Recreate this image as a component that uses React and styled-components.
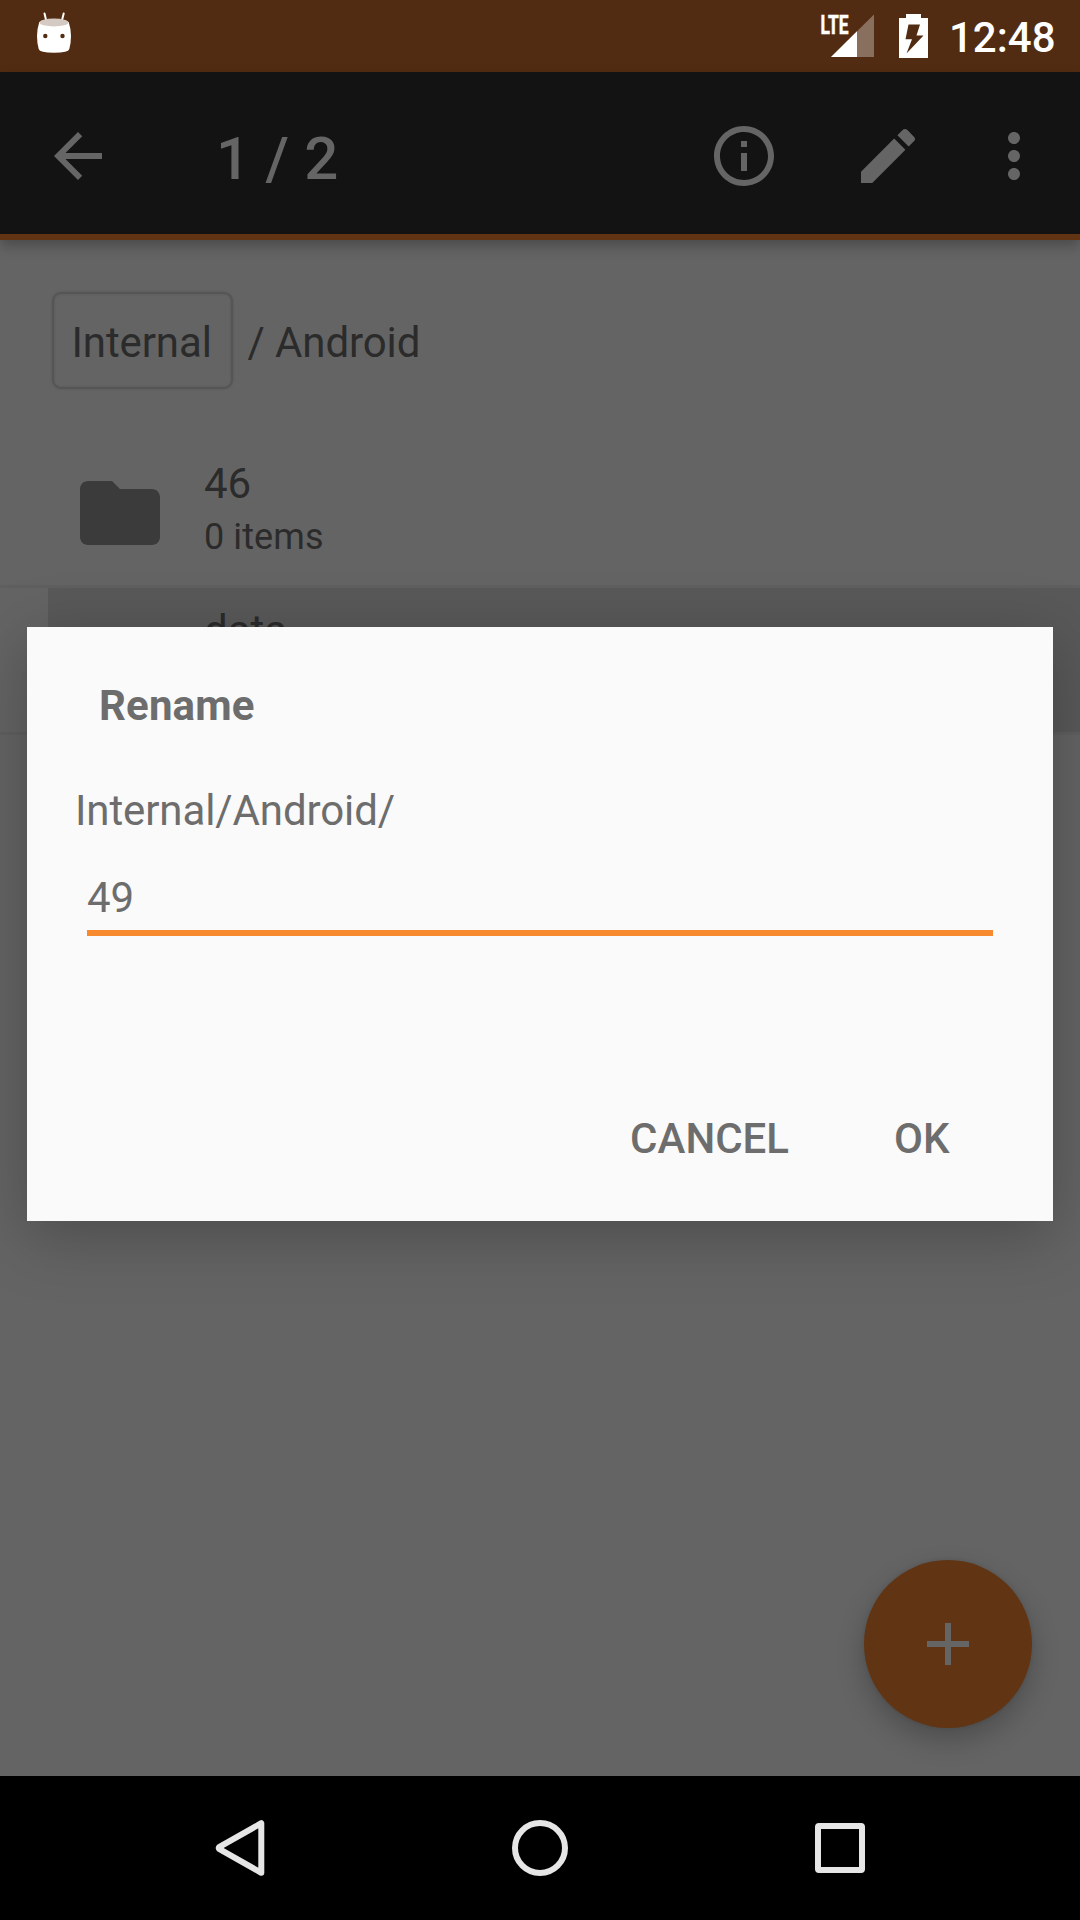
import React from "react";
import styled, { createGlobalStyle } from "styled-components";

const GlobalStyle = createGlobalStyle`
  *, *::before, *::after { box-sizing: border-box; }
  body { margin: 0; background: #000; font-family: Roboto, "Liberation Sans", sans-serif; }
`;

const Screen = styled.div`
  position: relative;
  display: flex;
  flex-direction: column;
  width: 1080px;
  height: 1920px;
  overflow: hidden;
  background: #646464;
  color: #2b2b2b;
`;

const StatusBar = styled.header`
  flex: none;
  display: flex;
  align-items: flex-start;
  height: 72px;
  padding: 0 25px 0 36px;
  background: #522c12;
`;

const StatusIcons = styled.div`
  display: flex;
  align-items: flex-start;
  gap: 23px;
  margin-left: auto;
`;

const Clock = styled.time`
  width: 106px;
  margin-left: -2px;
  padding-top: 13px;
  color: #fff;
  font-size: 42px;
  font-weight: 500;
  line-height: 50px;
  white-space: nowrap;
`;

const Icon = styled.svg`
  flex: none;
  display: block;
  width: ${(p) => p.$w || 72}px;
  height: ${(p) => p.$h || p.$w || 72}px;
  fill: ${(p) => p.$color || "#656565"};
`;

const Toolbar = styled.nav`
  flex: none;
  position: relative;
  display: flex;
  align-items: center;
  height: 168px;
  padding: 6px 30px 0 42px;
  background: #131313;
  border-bottom: 6px solid #613513;
  box-shadow: 0 6px 12px rgba(0, 0, 0, 0.25);
`;

const Counter = styled.h1`
  flex: 1;
  margin: 0 0 0 102px;
  padding-top: 6px;
  color: #656565;
  font-size: 60px;
  font-weight: 500;
  letter-spacing: 0.2px;
  line-height: 70px;
`;

const Actions = styled.div`
  display: flex;
  gap: ${(p) => p.$gap}px;
`;

const IconButton = styled.button`
  display: flex;
  padding: 0;
  border: 0;
  background: none;
`;

const Content = styled.main`
  flex: 1;
  display: flex;
  flex-direction: column;
`;

const Breadcrumb = styled.div`
  display: flex;
  align-items: flex-start;
  height: 201px;
  padding: 52px 0 0 52px;
  font-size: 42px;
  letter-spacing: -0.1px;
  line-height: 50px;
`;

const Crumb = styled.span`
  width: 180.5px;
  height: 97px;
  padding: 24px 0 0 17.5px;
  border: 2px solid #555;
  border-radius: 9px;
  box-shadow: 0 0 2px #565656, inset 0 0 2px #565656;
`;

const CrumbPath = styled.span`
  padding: 26px 0 0 15px;
  white-space: pre;
`;

const Row = styled.div`
  display: flex;
  height: 147px;
  padding-left: 48px;
  border-bottom: 3px solid #5f5f5f;
`;

const RowBody = styled.div`
  flex: 1;
  display: flex;
  align-items: center;
  gap: 36px;
  padding-left: 24px;
  background: ${(p) => (p.$selected ? "#595959" : "transparent")};
`;

const RowText = styled.div`
  align-self: flex-start;
  padding-top: 18px;
`;

const FileName = styled.div`
  font-size: 42px;
  line-height: 50px;
`;

const FileInfo = styled.div`
  padding-top: 7px;
  font-size: 36px;
  letter-spacing: 0.1px;
  line-height: 42px;
`;

const Fab = styled.button`
  position: absolute;
  left: 864px;
  top: 1560px;
  display: flex;
  align-items: center;
  justify-content: center;
  width: 168px;
  height: 168px;
  padding: 0;
  border: 0;
  border-radius: 50%;
  background: #613513;
  box-shadow: 0 12px 28px rgba(0, 0, 0, 0.23), 0 0 4px rgba(0, 0, 0, 0.1);
`;

const Dialog = styled.section`
  position: absolute;
  left: 27px;
  top: 627px;
  display: flex;
  flex-direction: column;
  width: 1026px;
  height: 594px;
  padding: 54px 60px 46px 48px;
  background: #fafafa;
  color: #6d6d6d;
  font-size: 42px;
  line-height: 50px;
  box-shadow: 0 14px 60px rgba(0, 0, 0, 0.25);
`;

const DialogTitle = styled.h2`
  margin: 0 0 0 24px;
  font-size: 42px;
  font-weight: 700;
  letter-spacing: 0.15px;
  line-height: 50px;
`;

const DialogPath = styled.div`
  margin-top: 55px;
  letter-spacing: -0.1px;
`;

const Field = styled.div`
  height: 67px;
  margin: 33px 0 0 12px;
  padding-top: 4px;
  border-bottom: 6px solid #f78a2e;
`;

const DialogActions = styled.div`
  display: flex;
  justify-content: flex-end;
  gap: 105px;
  margin-top: auto;
  padding: 0 43.5px 11px 0;
`;

const TextButton = styled.button`
  padding: 0;
  border: 0;
  background: none;
  color: inherit;
  font: 500 42px/50px Roboto, "Liberation Sans", sans-serif;
`;

const NavBar = styled.footer`
  flex: none;
  display: flex;
  align-items: center;
  justify-content: space-between;
  height: 144px;
  padding: 0 204px;
  background: #000;
`;

function FileRow({ name, info, selected }) {
  return (
    <Row>
      <RowBody $selected={selected}>
        <Icon $w={96} $color="#3b3b3b" viewBox="0 0 24 24">
          <path d="M10 4H4c-1.1 0-1.99.9-1.99 2L2 18c0 1.1.9 2 2 2h16c1.1 0 2-.9 2-2V8c0-1.1-.9-2-2-2h-8l-2-2z" />
        </Icon>
        <RowText>
          <FileName>{name}</FileName>
          {info && <FileInfo>{info}</FileInfo>}
        </RowText>
      </RowBody>
    </Row>
  );
}

export default function App() {
  return (
    <>
      <GlobalStyle />
      <Screen>
        <StatusBar>
          <Icon $w={36} $h={72} $color="#fff" viewBox="36 0 36 72">
            <path d="M44.5 13.5 L46.3 21 M63.7 13.5 L61.8 21" stroke="#fff" strokeWidth="2" strokeLinecap="round" />
            <path d="M39.3 22 H68.7 Q71 29 71 36 Q71 43 69.3 49 Q68.5 52.8 54 52.8 Q39.5 52.8 38.7 49 Q37 43 37 36 Q37 29 39.3 22z" />
            <ellipse cx="54" cy="22.5" rx="14.6" ry="3.9" fill="#d4cac3" />
            <circle cx="45.3" cy="36" r="2.2" fill="#522c12" />
            <circle cx="62.5" cy="36" r="2.2" fill="#522c12" />
          </Icon>
          <StatusIcons>
            <Icon $w={56} $h={72} $color="#fff" viewBox="819 0 56 72">
              <text x="820.5" y="33.6" fontFamily="Roboto, sans-serif" fontSize="26" fontWeight="700" stroke="#fff" strokeWidth="0.6" textLength="28" lengthAdjust="spacingAndGlyphs">LTE</text>
              <path d="M831 57 L874 14.5 V57z" opacity="0.32" />
              <path d="M831 57 L857 31.3 V57z" />
            </Icon>
            <Icon $w={30} $h={72} $color="#fff" viewBox="898 0 30 72">
              <path fillRule="evenodd" d="M906 14h15v4h7v40h-29V18h7z M908.5 24.5 L905.5 39.3 H912 L906.5 53.5 L923.5 35.5 H916.5 L920 24.5z" />
            </Icon>
            <Clock>12:48</Clock>
          </StatusIcons>
        </StatusBar>

        <Toolbar>
          <IconButton aria-label="Back">
            <Icon viewBox="0 0 24 24">
              <path d="M20 11H7.83l5.59-5.59L12 4l-8 8 8 8 1.41-1.41L7.83 13H20v-2z" />
            </Icon>
          </IconButton>
          <Counter>1 / 2</Counter>
          <Actions $gap={72}>
            <IconButton aria-label="Info">
              <Icon viewBox="0 0 24 24">
                <path d="M11 17h2v-6h-2v6zm1-15C6.48 2 2 6.48 2 12s4.48 10 10 10 10-4.48 10-10S17.52 2 12 2zm0 18c-4.41 0-8-3.59-8-8s3.59-8 8-8 8 3.59 8 8-3.59 8-8 8zM11 9h2V7h-2v2z" />
              </Icon>
            </IconButton>
            <Actions $gap={54}>
              <IconButton aria-label="Edit">
                <Icon viewBox="0 0 24 24">
                  <path d="M3 17.25V21h3.75L17.81 9.94l-3.75-3.75L3 17.25zM20.71 7.04c.39-.39.39-1.02 0-1.41l-2.34-2.34c-.39-.39-1.02-.39-1.41 0l-1.83 1.83 3.75 3.75 1.83-1.83z" />
                </Icon>
              </IconButton>
              <IconButton aria-label="More">
                <Icon viewBox="0 0 24 24">
                  <path d="M12 8c1.1 0 2-.9 2-2s-.9-2-2-2-2 .9-2 2 .9 2 2 2zm0 2c-1.1 0-2 .9-2 2s.9 2 2 2 2-.9 2-2-.9-2-2-2zm0 6c-1.1 0-2 .9-2 2s.9 2 2 2 2-.9 2-2-.9-2-2-2z" />
                </Icon>
              </IconButton>
            </Actions>
          </Actions>
        </Toolbar>

        <Content>
          <Breadcrumb>
            <Crumb>Internal</Crumb>
            <CrumbPath>/ Android</CrumbPath>
          </Breadcrumb>
          <FileRow name="46" info="0 items" />
          <FileRow name="data" selected />
        </Content>

        <NavBar>
          <Icon $w={72} viewBox="0 0 72 72">
            <path d="M57.3 11.2 V60.8 L15.5 37.2 Q13.8 36 15.5 34.8z" fill="none" stroke="#e6e6e6" strokeWidth="6" strokeLinejoin="round" />
          </Icon>
          <Icon $w={72} viewBox="0 0 72 72">
            <circle cx="36" cy="36" r="25" fill="none" stroke="#e6e6e6" strokeWidth="6" />
          </Icon>
          <Icon $w={72} viewBox="0 0 72 72">
            <rect x="14" y="14" width="44" height="44" rx="1" fill="none" stroke="#e6e6e6" strokeWidth="6" />
          </Icon>
        </NavBar>

        <Fab aria-label="Add">
          <Icon viewBox="0 0 24 24">
            <path d="M19 13h-6v6h-2v-6H5v-2h6V5h2v6h6v2z" />
          </Icon>
        </Fab>

        <Dialog>
          <DialogTitle>Rename</DialogTitle>
          <DialogPath>Internal/Android/</DialogPath>
          <Field>49</Field>
          <DialogActions>
            <TextButton>CANCEL</TextButton>
            <TextButton>OK</TextButton>
          </DialogActions>
        </Dialog>
      </Screen>
    </>
  );
}
